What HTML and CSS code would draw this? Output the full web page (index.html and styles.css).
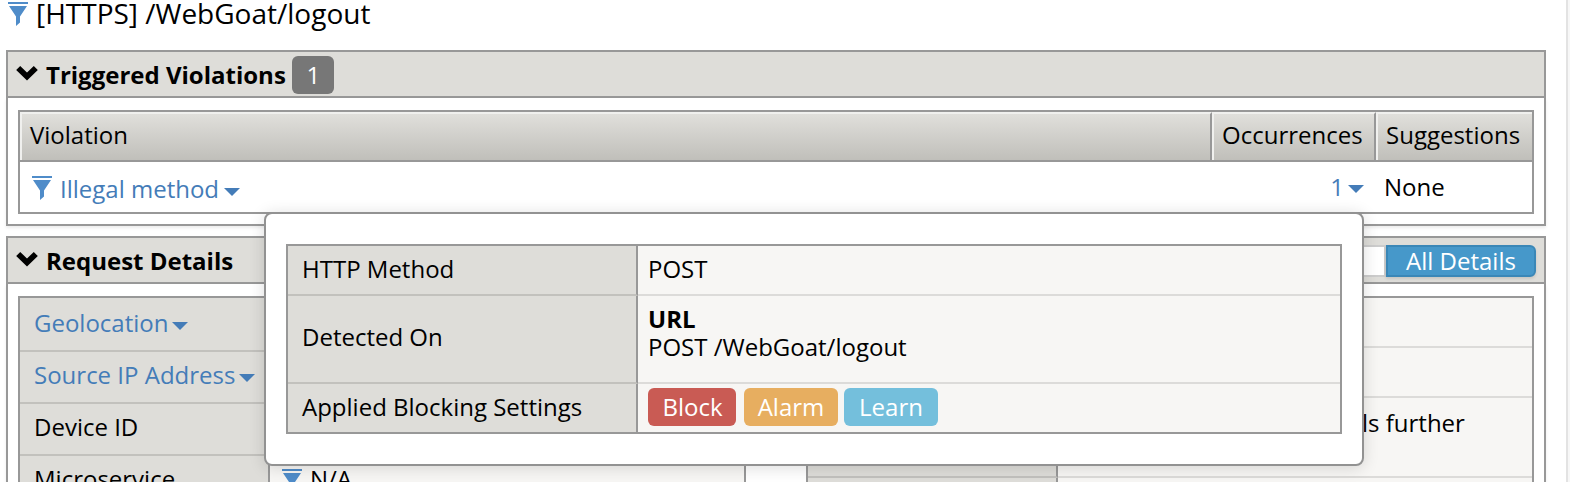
FILE: index.html
```html
<!DOCTYPE html>
<html lang="en">
<head>
<meta charset="utf-8">
<title>Request</title>
<link rel="stylesheet" href="styles.css">
</head>
<body>
<svg class="defs" aria-hidden="true">
  <symbol id="funnel" viewBox="0 0 20 24"><path d="M0 0H20V2H0ZM1 4H19L12 14.5V20.5L8 24V14.5Z" fill="#4f8cc9"/></symbol>
  <symbol id="chevron" viewBox="0 0 22 16"><path d="M2.2 3L11 11.5L19.8 3" fill="none" stroke="#000" stroke-width="5.8"/></symbol>
  <symbol id="caret" viewBox="0 0 16 8"><path d="M0 0H16L8 8Z" fill="#447cb8"/></symbol>
</svg>
<div class="page">
  <h1 class="title"><svg class="funnel"><use href="#funnel"/></svg><span>[HTTPS] /WebGoat/logout</span></h1>

  <section class="panel violations">
    <header class="bar"><svg class="chevron"><use href="#chevron"/></svg><h2>Triggered Violations</h2><span class="badge count">1</span></header>
    <div class="panel-body">
      <div class="vtable">
        <div class="vhead"><div>Violation</div><div>Occurrences</div><div>Suggestions</div></div>
        <div class="vrow">
          <a class="link method"><svg class="funnel"><use href="#funnel"/></svg><span>Illegal method</span><svg class="caret"><use href="#caret"/></svg></a>
          <a class="link occ"><span>1</span><svg class="caret"><use href="#caret"/></svg></a>
          <div class="none">None</div>
        </div>
      </div>
    </div>
  </section>

  <section class="panel details">
    <header class="bar"><svg class="chevron"><use href="#chevron"/></svg><h2>Request Details</h2>
      <div class="toggle"><span class="basic"></span><span class="all">All Details</span></div>
    </header>
    <div class="panel-body tables">
      <div class="dtable left">
        <div class="drow"><div class="label"><a class="link"><span>Geolocation</span><svg class="caret"><use href="#caret"/></svg></a></div><div class="value"></div></div>
        <div class="drow"><div class="label"><a class="link"><span>Source IP Address</span><svg class="caret"><use href="#caret"/></svg></a></div><div class="value"></div></div>
        <div class="drow"><div class="label">Device ID</div><div class="value"></div></div>
        <div class="drow"><div class="label">Microservice</div><div class="value"><svg class="funnel"><use href="#funnel"/></svg><span class="na">N/A</span></div></div>
      </div>
      <div class="dtable right">
        <div class="drow short"><div class="label"></div><div class="value"></div></div>
        <div class="drow short"><div class="label"></div><div class="value"></div></div>
        <div class="drow tall"><div class="label"></div><div class="value"><span class="further">ls further</span></div></div>
        <div class="drow"><div class="label"></div><div class="value"></div></div>
      </div>
    </div>
  </section>

  <div class="popup">
    <div class="ptable">
      <div class="plabel">HTTP Method</div><div class="pvalue">POST</div>
      <div class="plabel detected">Detected On</div><div class="pvalue url"><b>URL</b><span>POST /WebGoat/logout</span></div>
      <div class="plabel">Applied Blocking Settings</div>
      <div class="pvalue badges"><span class="badge block">Block</span><span class="badge alarm">Alarm</span><span class="badge learn">Learn</span></div>
    </div>
  </div>
</div>
</body>
</html>
```

FILE: styles.css
```css
* { box-sizing: border-box; }
html { background: #f7f7f7; overflow: hidden; }
body { margin: 0; height: 482px; overflow: hidden; font: 24px/28px "Open Sans", sans-serif; color: #000; }
.defs { position: absolute; width: 0; height: 0; }
.page { position: relative; width: 1568px; height: 482px; overflow: hidden; background: #fff; border-right: 2px solid #e3e3e3; padding-left: 6px; }

.funnel { width: 20px; height: 24px; flex: none; }
.chevron { width: 22px; height: 16px; flex: none; }
.caret { width: 16px; height: 8px; flex: none; margin: 6px 0 0 5px; }

.title { display: flex; align-items: flex-start; gap: 8px; margin: 0; height: 50px; padding: 2px 0 0 2px; font-size: 28px; font-weight: 400; line-height: 22px; }

.panel { width: 1540px; }
.details { margin-top: 10px; }
.bar { display: flex; align-items: center; height: 48px; background: #deddd9; border: 2px solid #989898; padding: 2px 0 0 8px; }
.bar h2 { margin: 0 0 0 8px; font-size: 24px; font-weight: 700; line-height: 28px; }
.bar .chevron { margin-top: -4px; }
.panel-body { border: 2px solid #989898; border-top: 0; padding: 12px 10px 10px; box-shadow: 0 2px 3px rgba(0, 0, 0, .08); }

.badge { display: inline-flex; align-items: center; justify-content: center; height: 38px; border-radius: 6px; color: #fff; }
.count { width: 42px; background: #777; margin-left: 6px; padding-left: 1px; }

.vtable { border: 2px solid #989898; }
.vhead { display: grid; grid-template-columns: 1192px 164px 156px; height: 50px; border-bottom: 2px solid #989898; }
.vhead div { padding-left: 8px; line-height: 42px; background: linear-gradient(#e0dfdb, #c0bfba); border-left: 2px solid #f0f0ee; border-top: 2px solid #f0f0ee; }
.vhead div:not(:last-child) { border-right: 2px solid #989898; }
.vrow { display: grid; grid-template-columns: 1192px 164px 156px; height: 50px; align-items: center; }
.link { display: flex; align-items: center; color: #447cb8; }
.vrow .method { padding: 3px 0 0 12px; }
.vrow .funnel { margin: -1px 8px 0 0; }
.vrow .occ { justify-content: flex-end; padding: 0 12px 0 0; }
.occ .caret { margin-top: 4px; margin-left: 4px; }
.none { padding-left: 8px; }

.toggle { display: flex; margin-left: auto; padding-right: 8px; height: 32px; }
.basic { width: 130px; background: #fff; border: 2px solid #ccc; border-radius: 6px 0 0 6px; }
.all { width: 150px; text-align: center; line-height: 28px; color: #fff; background: #4698ca; border: 2px solid #3a87b7; border-radius: 0 6px 6px 0; box-shadow: 0 2px 3px rgba(0, 0, 0, .1); }

.tables { display: flex; justify-content: space-between; height: 230px; }
.dtable { border: 2px solid #989898; }
.left { width: 728px; }
.right { width: 728px; }
.drow { display: flex; height: 52px; }
.left .drow:first-child { height: 54px; }
.label { width: 250px; background: #deddd9; border-right: 2px solid #989898; border-bottom: 2px solid #c2c1bd; padding: 0 0 5px 14px; display: flex; align-items: center; }
.left .drow:first-child .label { padding-bottom: 3px; }
.label .caret { margin-left: 4px; }
.value { flex: 1; background: #f7f6f4; border-bottom: 2px solid #dcdbd9; display: flex; align-items: center; padding-left: 12px; gap: 8px; }
.na { margin-top: -4px; }
.short { height: 50px; }
.tall { height: 80px; }
.further { margin: -28px 0 0 292px; }

.popup { position: absolute; left: 264px; top: 212px; width: 1100px; height: 254px; padding: 30px 20px; background: #fff; border: 2px solid #929292; border-radius: 8px; box-shadow: 0 2px 16px rgba(0, 0, 0, .14); }
.ptable { display: grid; grid-template-columns: 350px 1fr; grid-template-rows: 50px 88px 48px; border: 2px solid #989898; }
.plabel { background: #deddd9; border-right: 2px solid #989898; border-bottom: 2px solid #c2c1bd; padding: 0 0 2px 14px; display: flex; align-items: center; }
.detected { padding-bottom: 4px; }
.pvalue { background: #f7f6f4; border-bottom: 2px solid #dcdbd9; padding: 0 0 2px 10px; display: flex; align-items: center; }
.ptable > :nth-last-child(-n+2) { border-bottom: 0; }
.url { flex-direction: column; align-items: flex-start; padding-top: 9px; justify-content: flex-start; }
.badges { align-items: flex-start; padding-top: 4px; }
.block { width: 88px; background: #c95b54; padding-left: 1px; }
.alarm { width: 94px; background: #e7ae60; margin-left: 8px; }
.learn { width: 94px; background: #74bfdc; margin-left: 6px; }
```
